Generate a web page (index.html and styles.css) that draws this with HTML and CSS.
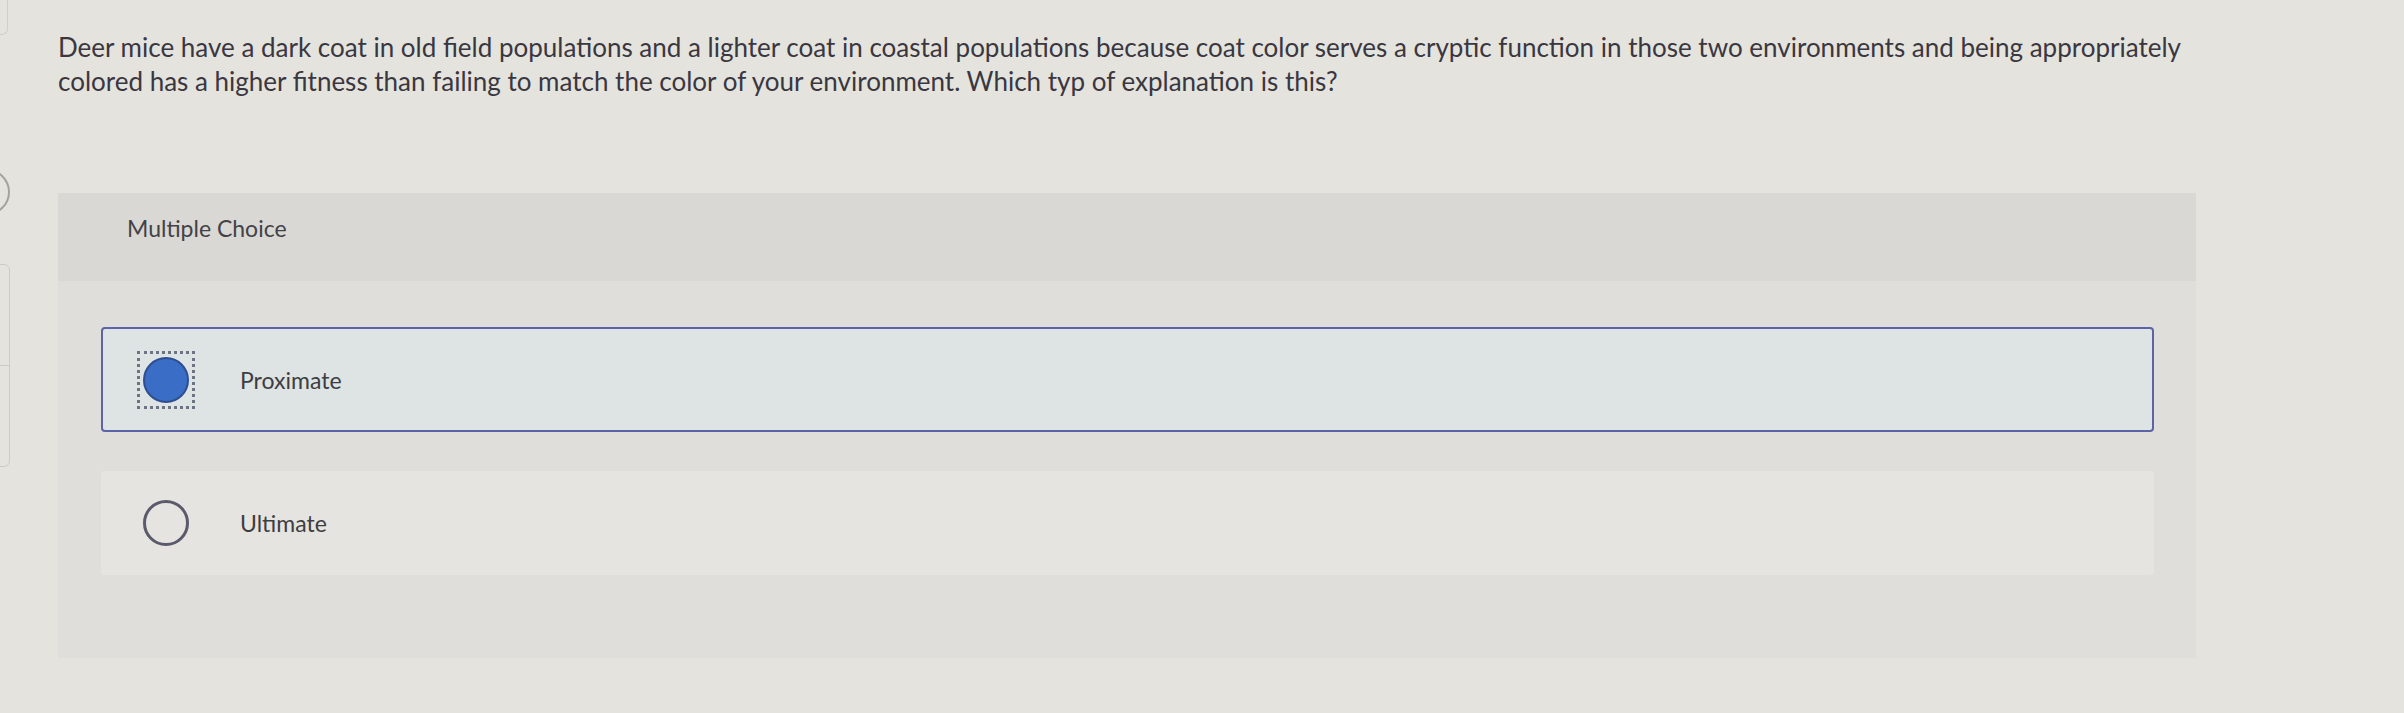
FILE: index.html
```html
<!DOCTYPE html>
<html lang="en">
<head>
    <meta charset="UTF-8">
    <title>Multiple Choice</title>
    <link rel="stylesheet" href="styles.css">
</head>
<body>
    <div class="page">
        <!-- left rail, mostly off screen -->
        <div class="rail">
            <div class="rail-top"></div>
            <div class="rail-circle"></div>
            <div class="rail-nav">
                <div class="rail-nav-item"></div>
                <div class="rail-nav-item"></div>
            </div>
        </div>

        <div class="main">
            <p class="question">Deer mice have a dark coat in old field populations and a lighter coat in coastal populations because coat color serves a cryptic function in those two environments and being appropriately colored has a higher fitness than failing to match the color of your environment. Which typ of explanation is this?</p>

            <div class="panel">
                <div class="panel-head">Multiple Choice</div>
                <div class="panel-body">
                    <label class="option selected">
                        <span class="radio-focus"><span class="radio"></span></span>
                        <span class="option-text">Proximate</span>
                    </label>
                    <label class="option">
                        <span class="radio-focus"><span class="radio"></span></span>
                        <span class="option-text">Ultimate</span>
                    </label>
                </div>
            </div>
        </div>
    </div>
</body>
</html>
```

FILE: styles.css
```css
body {
    margin: 0;
    background-color: #e4e3de;
    font-family: Lato, "Open Sans", sans-serif;
    color: #3a3740;
    height: 713px;
    overflow: hidden;
}

.page {
    display: flex;
}

/* rail */
.rail {
    width: 10px;
    flex-shrink: 0;
    overflow: hidden;
    display: flex;
    flex-direction: column;
}

.rail-top {
    width: 60px;
    height: 35px;
    margin-left: -52px;
    border: 1px solid #cfcec9;
    border-top: none;
    border-radius: 0 0 6px 6px;
    box-sizing: border-box;
}

.rail-circle {
    width: 46px;
    height: 46px;
    margin-left: -36px;
    margin-top: 134px;
    border: 2px solid #a3a29e;
    border-radius: 50%;
    box-sizing: border-box;
}

.rail-nav {
    width: 60px;
    margin-left: -50px;
    margin-top: 49px;
    border: 1px solid #cccbc6;
    border-radius: 0 6px 6px 0;
    box-sizing: border-box;
}

.rail-nav-item {
    height: 100px;
}

.rail-nav-item + .rail-nav-item {
    border-top: 1px solid #cccbc6;
}

/* main */
.main {
    padding-left: 48px;
}

.question {
    margin: 30px 0 0 0;
    width: 2180px;
    font-size: 26px;
    line-height: 34px;
}

.panel {
    width: 2138px;
    height: 465px;
    margin-top: 95px;
    background-color: #dfdeda;
}

.panel-head {
    height: 88px;
    box-sizing: border-box;
    padding: 21px 0 0 69px;
    background-color: #d9d8d4;
    font-size: 23px;
    line-height: 28px;
    color: #424247;
}

.panel-body {
    display: flex;
    flex-direction: column;
    gap: 39px;
    padding: 46px 42px 0 43px;
}

.option {
    display: flex;
    align-items: center;
    height: 104px;
    padding-left: 40px;
    background-color: #e5e4e0;
    border: 2px solid transparent;
    border-radius: 4px;
    box-sizing: border-box;
}

.option.selected {
    height: 105px;
    background-color: #dee3e3;
    border-color: #5c63a6;
}

.radio-focus {
    display: flex;
    flex-shrink: 0;
}

.selected .radio-focus {
    outline: 3px dotted #6b7384;
    outline-offset: 3px;
}

.radio {
    width: 46px;
    height: 46px;
    border: 3px solid #5a5a6c;
    border-radius: 50%;
    box-sizing: border-box;
}

.selected .radio {
    background-color: #3a6dc5;
    border: 2px solid #2e4e90;
}

.option-text {
    margin-left: 51px;
    font-size: 23px;
    color: #3d3d42;
}
```
